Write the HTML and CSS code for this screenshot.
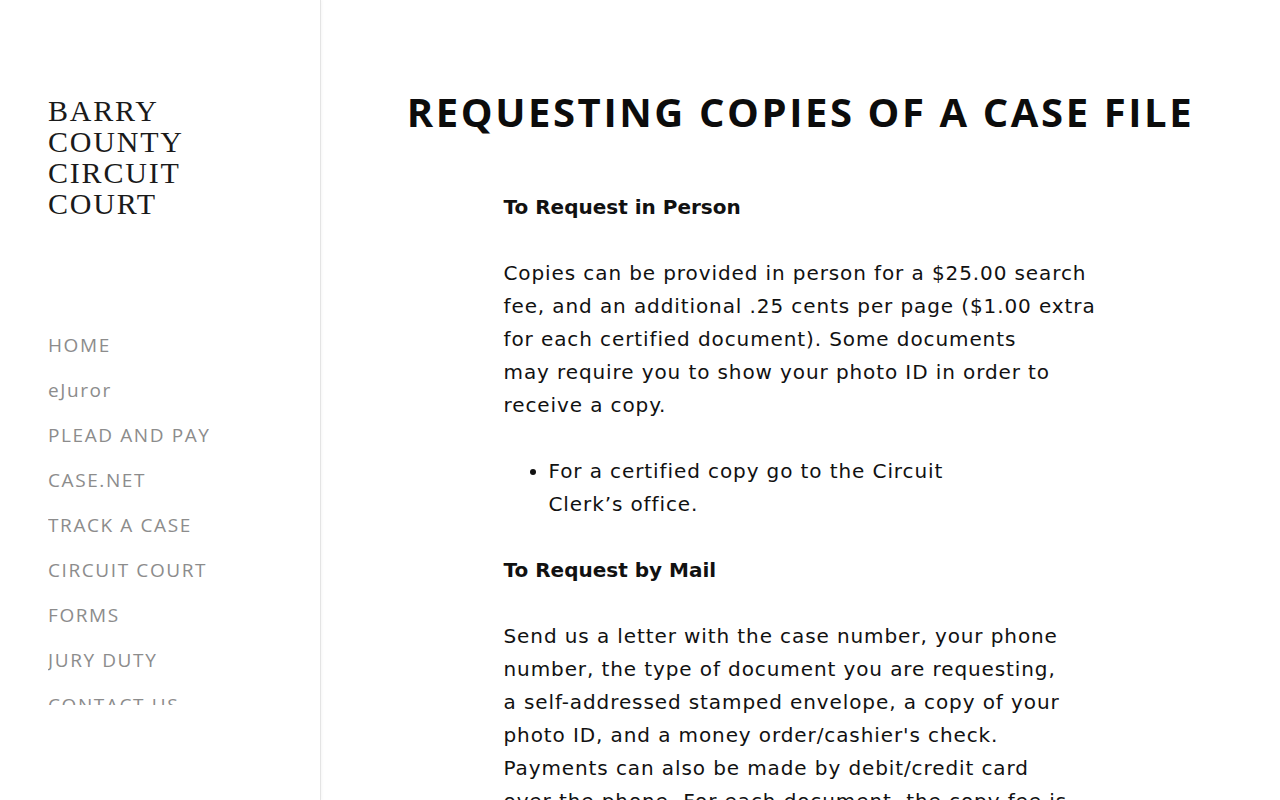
FILE: index.html
```html
<!DOCTYPE html>
<html lang="en">
<head>
<meta charset="utf-8">
<title>Requesting Copies of a Case File</title>
<link rel="stylesheet" href="styles.css">
</head>
<body>
<div class="layout">
  <aside class="sidebar">
    <div class="site-title">BARRY<br>COUNTY<br>CIRCUIT<br>COURT</div>
    <nav class="nav">
      <a href="#">HOME</a>
      <a href="#">eJuror</a>
      <a href="#">PLEAD AND PAY</a>
      <a href="#">CASE.NET</a>
      <a href="#">TRACK A CASE</a>
      <a href="#">CIRCUIT COURT</a>
      <a href="#">FORMS</a>
      <a href="#">JURY DUTY</a>
      <a href="#">CONTACT US</a>
    </nav>
  </aside>
  <main class="main">
    <h1 class="page-title">REQUESTING COPIES OF A CASE FILE</h1>
    <div class="content">
      <h3>To Request in Person</h3>
      <p>Copies can be provided in person for a $25.00 search<br>fee, and an additional .25 cents per page ($1.00 extra<br>for each certified document). Some documents<br>may require you to show your photo ID in order to<br>receive a copy.</p>
      <ul>
        <li>For a certified copy go to the Circuit<br>Clerk’s office.</li>
      </ul>
      <h3>To Request by Mail</h3>
      <p>Send us a letter with the case number, your phone<br>number, the type of document you are requesting,<br>a self-addressed stamped envelope, a copy of your<br>photo ID, and a money order/cashier's check.<br>Payments can also be made by debit/credit card<br>over the phone. For each document, the copy fee is<br>$1.00 per page.</p>
    </div>
  </main>
</div>
</body>
</html>
```

FILE: styles.css
```css
html, body {
  margin: 0;
  padding: 0;
  background: #fff;
  height: 100%;
  overflow: hidden;
}
.layout {
  display: flex;
  height: 800px;
}
.sidebar {
  width: 321px;
  flex: none;
  border-right: 1px solid #e4e4e4;
  box-shadow: 1px 0 3px rgba(0,0,0,0.04);
  box-sizing: border-box;
  padding: 95px 0 0 48px;
  display: flex;
  flex-direction: column;
}
.site-title {
  font-family: "Liberation Serif", "DejaVu Serif", serif;
  font-size: 30px;
  line-height: 31px;
  letter-spacing: 1.8px;
  color: #1a1a1a;
}
.nav {
  margin-top: 104px;
  height: 382px;
  overflow: hidden;
  display: flex;
  flex-direction: column;
}
.nav a {
  flex: none;
  font-family: "Open Sans", "Noto Sans", sans-serif;
  font-size: 19px;
  line-height: 45px;
  letter-spacing: 1.6px;
  color: #8c8c8c;
  text-decoration: none;
}
.main {
  flex: 1;
  font-family: "DejaVu Sans", "Open Sans", sans-serif;
  color: #111;
  padding-top: 86px;
}
.page-title {
  margin: 0;
  text-align: center;
  font-family: "Open Sans", "Noto Sans", sans-serif;
  font-size: 40px;
  font-weight: 700;
  letter-spacing: 2.6px;
  line-height: 52px;
  color: #0c0c0c;
}
.content {
  width: 640px;
  margin: 53px 0 0 calc(50% - 297px);
  font-size: 20px;
  line-height: 33px;
  letter-spacing: 0.9px;
}
.content h3 {
  margin: 0 0 33px;
  font-size: 20px;
  font-weight: 700;
  line-height: 33px;
  letter-spacing: 0;
}
.content p {
  margin: 0 0 33px;
}
.content ul {
  margin: 0 0 33px;
  padding-left: 45px;
}
.content li {
  max-width: 480px;
}
```
